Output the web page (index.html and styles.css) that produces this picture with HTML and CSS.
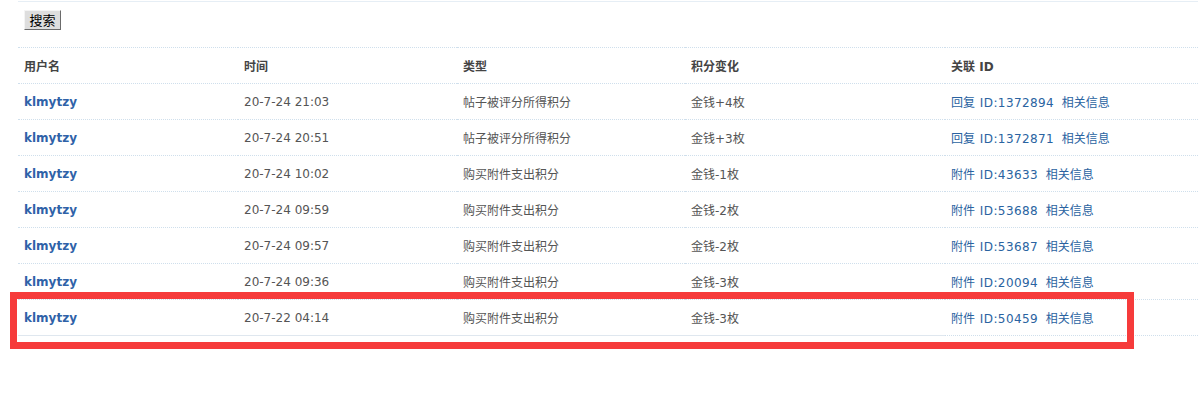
FILE: index.html
```html
<!DOCTYPE html>
<html lang="zh-CN">
<head>
<meta charset="utf-8">
<title>积分记录</title>
<link rel="stylesheet" href="styles.css">
</head>
<body>
<div class="page">
  <div class="search-bar">
    <button class="btn" type="button">搜索</button>
  </div>
  <table class="log">
    <thead>
      <tr>
        <th class="c1">用户名</th>
        <th class="c2">时间</th>
        <th class="c3">类型</th>
        <th class="c4">积分变化</th>
        <th class="c5">关联 ID</th>
      </tr>
    </thead>
    <tbody>
      <tr>
        <td><a class="user" href="#">klmytzy</a></td>
        <td>20-7-24 21:03</td>
        <td>帖子被评分所得积分</td>
        <td>金钱+4枚</td>
        <td><a href="#">回复 <span class="id">ID:1372894</span></a>&nbsp;&nbsp;<a href="#">相关信息</a></td>
      </tr>
      <tr>
        <td><a class="user" href="#">klmytzy</a></td>
        <td>20-7-24 20:51</td>
        <td>帖子被评分所得积分</td>
        <td>金钱+3枚</td>
        <td><a href="#">回复 <span class="id">ID:1372871</span></a>&nbsp;&nbsp;<a href="#">相关信息</a></td>
      </tr>
      <tr>
        <td><a class="user" href="#">klmytzy</a></td>
        <td>20-7-24 10:02</td>
        <td>购买附件支出积分</td>
        <td>金钱-1枚</td>
        <td><a href="#">附件 <span class="id">ID:43633</span></a>&nbsp;&nbsp;<a href="#">相关信息</a></td>
      </tr>
      <tr>
        <td><a class="user" href="#">klmytzy</a></td>
        <td>20-7-24 09:59</td>
        <td>购买附件支出积分</td>
        <td>金钱-2枚</td>
        <td><a href="#">附件 <span class="id">ID:53688</span></a>&nbsp;&nbsp;<a href="#">相关信息</a></td>
      </tr>
      <tr>
        <td><a class="user" href="#">klmytzy</a></td>
        <td>20-7-24 09:57</td>
        <td>购买附件支出积分</td>
        <td>金钱-2枚</td>
        <td><a href="#">附件 <span class="id">ID:53687</span></a>&nbsp;&nbsp;<a href="#">相关信息</a></td>
      </tr>
      <tr>
        <td><a class="user" href="#">klmytzy</a></td>
        <td>20-7-24 09:36</td>
        <td>购买附件支出积分</td>
        <td>金钱-3枚</td>
        <td><a href="#">附件 <span class="id">ID:20094</span></a>&nbsp;&nbsp;<a href="#">相关信息</a></td>
      </tr>
      <tr class="last">
        <td><a class="user" href="#">klmytzy</a></td>
        <td>20-7-22 04:14</td>
        <td>购买附件支出积分</td>
        <td>金钱-3枚</td>
        <td><a href="#">附件 <span class="id">ID:50459</span></a>&nbsp;&nbsp;<a href="#">相关信息</a></td>
      </tr>
    </tbody>
  </table>
  <div class="highlight"></div>
</div>
</body>
</html>
```
FILE: styles.css
```css
html, body {
  margin: 0;
  padding: 0;
  background: #fff;
}
body {
  font-family: "DejaVu Sans", Verdana, "Noto Sans CJK SC", sans-serif;
  font-size: 12px;
  color: #444;
}
.page {
  position: relative;
  padding-left: 18px;
  min-height: 390px;
}
.search-bar {
  border-top: 1px solid #e6eef5;
  margin-top: 1px;
  padding: 8px 0 15px 6px;
  height: 22px;
}
.btn {
  font-family: "Noto Sans CJK SC", sans-serif;
  font-size: 13px;
  line-height: 16px;
  color: #000;
  background: #dedede;
  border: 1px solid;
  border-color: #f4f4f4 #6b6b6b #6b6b6b #f4f4f4;
  padding: 1px 4px 1px 4px;
  margin: 0;
  height: 20px;
  width: 37px;
  display: block;
}
.log {
  border-collapse: collapse;
  width: 1180px;
  table-layout: fixed;
}
.log th, .log td {
  text-align: left;
  padding: 0 6px;
  height: 35px;
  border-top: 1px dotted #cfdfec;
  vertical-align: middle;
  white-space: nowrap;
}
.log th {
  font-family: "DejaVu Sans", "Noto Sans CJK SC", sans-serif;
  font-weight: bold;
  color: #444;
}
.log td {
  font-family: "DejaVu Sans", "Noto Sans CJK SC", sans-serif;
  color: #555;
}
.c1 { width: 208px; }
.c2 { width: 207px; }
.c3 { width: 216px; }
.c4 { width: 248px; }
.log a {
  color: #2a63a1;
  text-decoration: none;
}
.log .id {
  letter-spacing: 0.4px;
  margin-left: 1px;
}
.log a.user {
  font-weight: bold;
  color: #2f62a8;
}
.log tr.last td {
  border-bottom: 1px dotted #cfdfec;
}
.log tr.last td:not(:last-child) {
  border-bottom: 1px solid #dfe7ef;
}
.highlight {
  position: absolute;
  left: 10px;
  top: 291px;
  width: 1110px;
  height: 43px;
  border: 7px solid #f63b3b;
  pointer-events: none;
}
```
